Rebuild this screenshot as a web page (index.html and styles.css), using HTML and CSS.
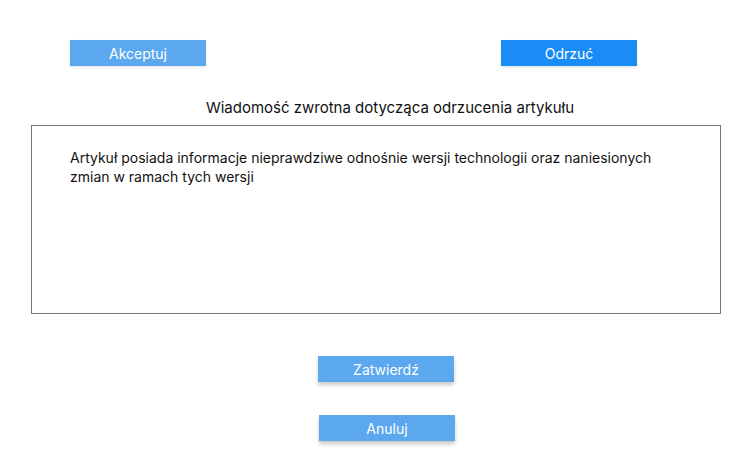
FILE: index.html
```html
<!DOCTYPE html>
<html lang="pl">
<head>
<meta charset="utf-8">
<link rel="stylesheet" href="styles.css">
</head>
<body>
<div class="page">
  <div class="top-row">
    <button class="btn btn-light">Akceptuj</button>
    <button class="btn btn-strong">Odrzuć</button>
  </div>
  <h1 class="title">Wiadomość zwrotna dotycząca odrzucenia artykułu</h1>
  <div class="message-box">
    <p class="message">Artykuł posiada informacje nieprawdziwe odnośnie wersji technologii oraz naniesionych zmian w ramach tych wersji</p>
  </div>
  <div class="actions">
    <button class="btn btn-light btn-shadow btn-confirm">Zatwierdź</button>
    <button class="btn btn-light btn-shadow btn-cancel">Anuluj</button>
  </div>
</div>
</body>
</html>
```
FILE: styles.css
```css
* { box-sizing: border-box; }
html, body { margin: 0; padding: 0; background: #fff; }
body { font-family: Inter, "Noto Sans", sans-serif; color: #111; }
.page { width: 747px; height: 475px; padding-top: 40px; }
.top-row { display: flex; justify-content: space-between; padding: 0 110px 0 70px; }
.btn {
  width: 136px; height: 26px; border: 0; padding: 0; margin: 0;
  font-family: Inter, "Noto Sans", sans-serif; font-size: 14px; color: #fff;
  display: flex; align-items: center; justify-content: center;
  box-shadow: 0 1px 2px rgba(0,0,0,0.12);
}
.btn-light { background: #5ba8ee; }
.btn-strong { background: #198cf6; }
.btn-shadow { box-shadow: 0 3px 4px rgba(0,0,0,0.22); }
.title {
  margin: 32px 0 0 0; padding-left: 33px; font-size: 15px; font-weight: 400;
  text-align: center; line-height: 20px; color: #111;
}
.message-box {
  margin: 7px 0 0 31px; width: 690px; height: 189px;
  border: 1px solid #777; padding: 22px 40px 0 38px;
}
.message { margin: 0; font-size: 14px; line-height: 19px; width: 600px; color: #111; }
.actions { display: flex; flex-direction: column; align-items: flex-start; gap: 33px; margin-top: 42px; }
.btn-confirm { margin-left: 318px; }
.btn-cancel { margin-left: 319px; }
```
